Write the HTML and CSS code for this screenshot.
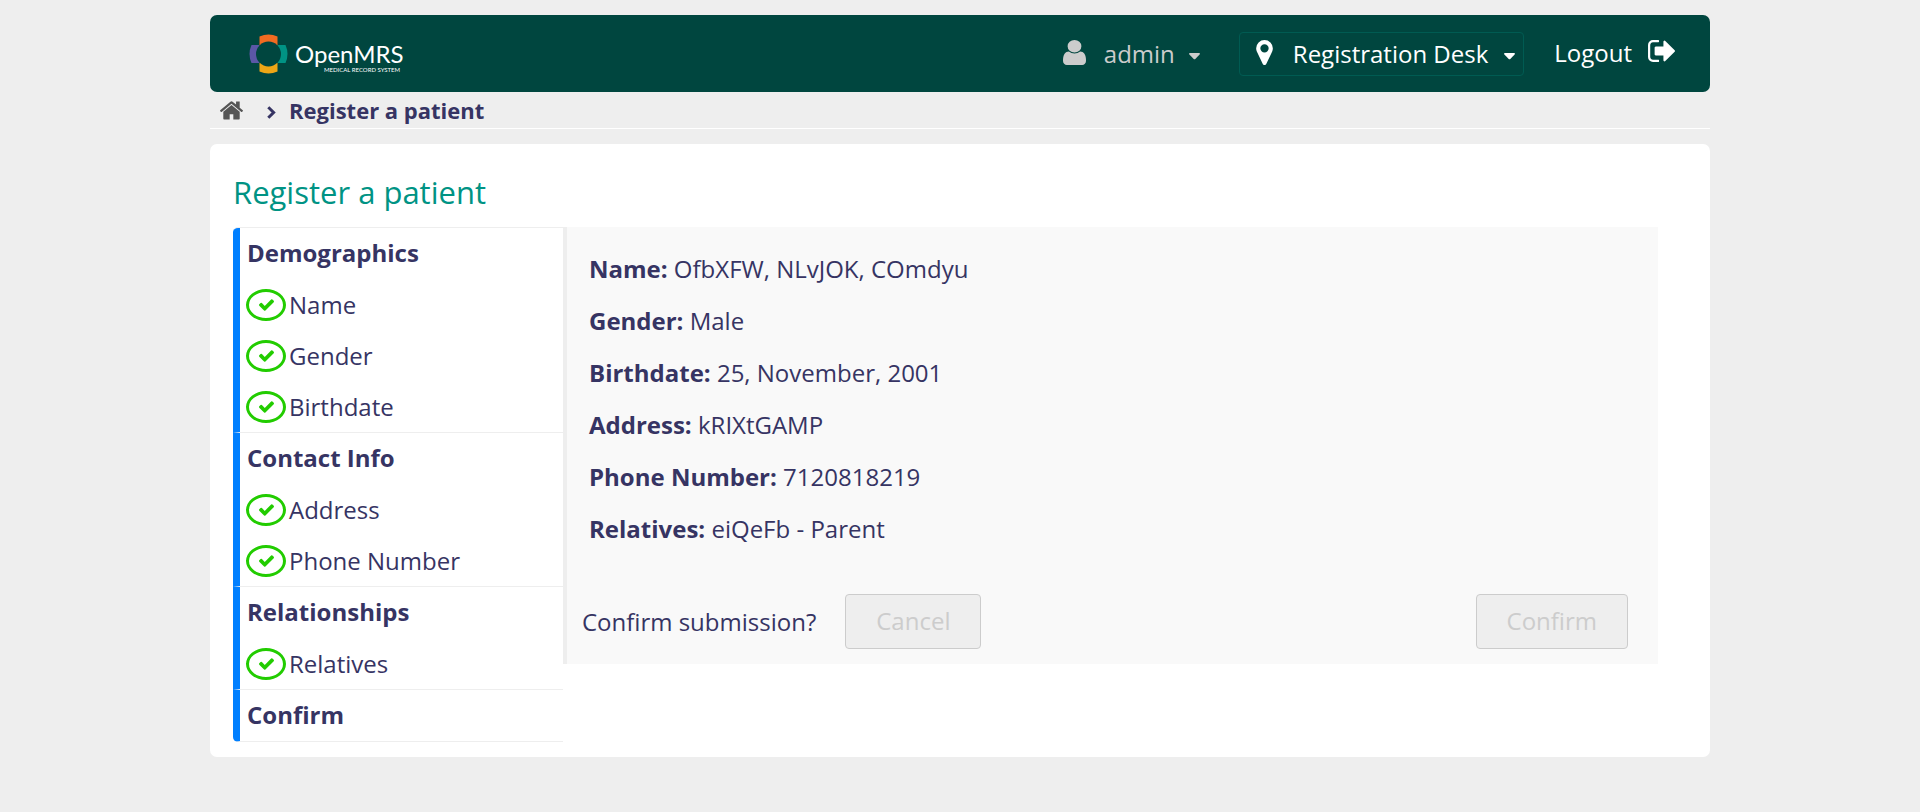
FILE: index.html
```html
<!DOCTYPE html>
<html lang="en">
<head>
<meta charset="utf-8">
<meta name="viewport" content="width=device-width, initial-scale=1">
<title>Register a patient</title>
<link rel="stylesheet" href="styles.css">
</head>
<body>
<svg class="sprite" aria-hidden="true">
  <symbol id="check" viewBox="121 334 1550 1188"><path d="M1671 566q0 40-28 68l-724 724-136 136q-28 28-68 28t-68-28l-136-136-362-362q-28-28-28-68t28-68l136-136q28-28 68-28t68 28l294 295 656-657q28-28 68-28t68 28l136 136q28 28 28 68z"/></symbol>
  <symbol id="caret" viewBox="0 0 11 7"><path d="M0.8 0h9.400q1.200 .3 .4 1.400l-4.300 4.500q-.8 .7-1.600 0l-4.300-4.500q-.8-1.100 .4-1.400z"/></symbol>
</svg>
<div class="page">
  <header class="topbar">
    <a class="logo" href="#" aria-label="OpenMRS home">
      <svg width="164" height="40" viewBox="0 0 164 40">
        <path fill="#f26b21" d="M10.500 2.500q9-4 18 0v10h-18z"/>
        <path fill="#eea616" d="M10.500 37.500q9 4 18 0v-9h-18z"/>
        <path fill="#5b57a6" d="M2.500 11q-4 9 0 18h8v-18z"/>
        <path fill="#009384" d="M36.500 11q4 9 0 18h-8v-18z"/>
        <circle cx="19.500" cy="20" r="12.500" fill="#00463f"/>
        <text class="logo-name" x="46" y="29">OpenMRS</text>
        <text class="logo-tag" x="75" y="38">MEDICAL RECORD SYSTEM</text>
      </svg>
    </a>
    <nav class="account" aria-label="Account">
      <button class="user" type="button">
        <svg class="icon" width="23" height="25" viewBox="256 128 1280 1536" preserveAspectRatio="none"><path d="M1536 1399q0 109-62.500 187t-150.500 78h-854q-88 0-150.500-78t-62.500-187q0-85 8.500-160.500t31.500-152 58.500-131 94-89 134.500-34.500q131 128 313 128t313-128q76 0 134.500 34.500t94 89 58.500 131 31.500 152 8.500 160.500zm-256-887q0 159-112.500 271.500t-271.500 112.500-271.500-112.500-112.500-271.500 112.500-271.500 271.500-112.500 271.500 112.500 112.500 271.500z"/></svg>
        <span class="user-name">admin</span>
        <svg class="caret" width="11" height="7"><use href="#caret"/></svg>
      </button>
      <button class="location" type="button">
        <svg class="icon" width="17" height="25" viewBox="0 128 1024 1536"><path d="M768 640q0-106-75-181t-181-75-181 75-75 181 75 181 181 75 181-75 75-181zm256 0q0 109-33 179l-364 774q-16 33-47.500 52t-67.500 19-67.500-19-46.500-52l-365-774q-33-70-33-179 0-212 150-362t362-150 362 150 150 362z"/></svg>
        <span class="location-name">Registration Desk</span>
        <svg class="caret" width="11" height="7"><use href="#caret"/></svg>
      </button>
      <a class="logout" href="#">Logout
        <svg class="icon" width="27" height="22" viewBox="64 256 1568 1280"><path d="M704 1440q0 4 1 20t.5 26.500-3 23.500-10 19.500-20.500 6.500h-320q-119 0-203.500-84.500t-84.500-203.500v-704q0-119 84.500-203.500t203.500-84.500h320q13 0 22.500 9.500t9.500 22.500q0 4 1 20t.5 26.500-3 23.500-10 19.500-20.500 6.500h-320q-66 0-113 47t-47 113v704q0 66 47 113t113 47h312l11.500 1 11.500 3 8 5.500 7 9 2 13.500zm928-544q0 26-19 45l-544 544q-19 19-45 19t-45-19-19-45v-288h-448q-26 0-45-19t-19-45v-384q0-26 19-45t45-19h448v-288q0-26 19-45t45-19 45 19l544 544q19 19 19 45z"/></svg>
      </a>
    </nav>
  </header>

  <nav class="breadcrumbs" aria-label="Breadcrumb">
    <a class="home" href="#" aria-label="Home">
      <svg width="23" height="19" viewBox="24 256 1616 1280"><path d="M1408 992v480q0 26-19 45t-45 19h-384v-384h-256v384h-384q-26 0-45-19t-19-45v-480q0-1 .5-3t.5-3l575-474 575 474q1 2 1 6zm223-69l-62 74q-8 9-21 11h-3q-13 0-21-7l-692-577-692 577q-12 8-24 7-13-2-21-11l-62-74q-8-10-7-23.500t11-21.500l719-599q32-26 76-26t76 26l244 204v-195q0-14 9-23t23-9h192q14 0 23 9t9 23v408l219 182q10 8 11 21.500t-7 23.500z"/></svg>
    </a>
    <svg class="chevron" width="9" height="13" viewBox="0 0 9 13"><path d="M1.300 1.300l5.300 5.200-5.300 5.200"/></svg>
    <span>Register a patient</span>
  </nav>

  <main class="card">
    <h1>Register a patient</h1>
    <div class="wizard">
      <nav class="steps" aria-label="Form sections">
        <section>
          <h2>Demographics</h2>
          <ul>
            <li><span class="done"><svg width="15" height="12"><use href="#check"/></svg></span>Name</li>
            <li><span class="done"><svg width="15" height="12"><use href="#check"/></svg></span>Gender</li>
            <li><span class="done"><svg width="15" height="12"><use href="#check"/></svg></span>Birthdate</li>
          </ul>
        </section>
        <section>
          <h2>Contact Info</h2>
          <ul>
            <li><span class="done"><svg width="15" height="12"><use href="#check"/></svg></span>Address</li>
            <li><span class="done"><svg width="15" height="12"><use href="#check"/></svg></span>Phone Number</li>
          </ul>
        </section>
        <section>
          <h2>Relationships</h2>
          <ul>
            <li><span class="done"><svg width="15" height="12"><use href="#check"/></svg></span>Relatives</li>
          </ul>
        </section>
        <section>
          <h2>Confirm</h2>
        </section>
      </nav>
      <form class="summary">
        <dl>
          <div><dt>Name:</dt> <dd>OfbXFW, NLvJOK, COmdyu</dd></div>
          <div><dt>Gender:</dt> <dd>Male</dd></div>
          <div><dt>Birthdate:</dt> <dd>25, November, 2001</dd></div>
          <div><dt>Address:</dt> <dd>kRIXtGAMP</dd></div>
          <div><dt>Phone Number:</dt> <dd>7120818219</dd></div>
          <div><dt>Relatives:</dt> <dd>eiQeFb - Parent</dd></div>
        </dl>
        <div class="actions">
          <span>Confirm submission?</span>
          <button type="button" disabled>Cancel</button>
          <button class="submit" type="submit" disabled>Confirm</button>
        </div>
      </form>
    </div>
  </main>
</div>
</body>
</html>
```
FILE: styles.css
```css
* {
  box-sizing: border-box;
}

body {
  margin: 0;
  background: #eee;
  color: #363463;
  font: 400 24px/34px "Open Sans", sans-serif;
}

.sprite {
  display: none;
}

svg {
  display: block;
  flex: none;
  fill: currentColor;
}

.page {
  max-width: 1500px;
  margin: 0 auto;
  padding: 15px 0;
}

.topbar {
  display: flex;
  align-items: center;
  justify-content: space-between;
  padding: 17px 35px 16px 39px;
  border-radius: 7px;
  background: #00463f;
  color: #fff;
}

.logo-name {
  fill: #fff;
  font: 400 24px Lato, sans-serif;
}

.logo-tag {
  fill: #fff;
  font: 400 6px Lato, sans-serif;
}

.account {
  display: flex;
  align-items: center;
  gap: 30px;
}

.account button {
  display: flex;
  align-items: center;
  border: 1px solid transparent;
  border-radius: 4px;
  background: none;
  color: inherit;
  font: inherit;
}

.account .icon {
  margin-bottom: 4px;
}

.account .user {
  gap: 18px;
  padding: 4px 8px;
  color: #ccc;
}

.account .location {
  gap: 20px;
  padding: 4px 8px 4px 16px;
  border-color: #005b52;
}

.account .caret {
  margin: 4px 0 0 -4px;
}

.logout {
  display: flex;
  align-items: center;
  gap: 16px;
  padding-bottom: 2px;
  color: #fff;
  text-decoration: none;
}

.breadcrumbs {
  display: flex;
  align-items: center;
  height: 37px;
  padding: 0 10px;
  border-bottom: 1px solid #fff;
  font-size: 22px;
  font-weight: 700;
}

.home {
  color: #555;
}

.chevron {
  margin: 4px 13px 0 24px;
  overflow: visible;
  fill: none;
  stroke: currentColor;
  stroke-width: 3;
}

.card {
  margin-top: 15px;
  padding: 23px 52px 15px 23px;
  border-radius: 7px;
  background: #fff;
}

h1 {
  margin: 0 0 10px;
  color: #009384;
  font-size: 31px;
  font-weight: 400;
  line-height: 50px;
}

.wizard {
  display: grid;
  grid-template-columns: 330px 1fr;
  align-items: start;
}

.steps {
  border-top: 1px solid #eee;
  border-radius: 5px 0 0 5px;
  overflow: hidden;
}

.steps section {
  border-bottom: 1px solid #eee;
  border-left: 7px solid #007fff;
}

.steps h2 {
  margin: 0;
  padding: 0 0 2px 7px;
  font-size: 24px;
  font-weight: 700;
  line-height: 49px;
}

.steps ul {
  margin: 0;
  padding: 0;
  list-style: none;
}

.steps li {
  display: flex;
  align-items: center;
  gap: 3px;
  padding-left: 6px;
  line-height: 51px;
}

.done {
  display: grid;
  place-items: center;
  width: 40px;
  height: 32px;
  border: 3px solid #2c0;
  border-radius: 50%;
  color: #2c0;
}

.summary {
  padding: 16px 30px 15px 15px;
  border-left: 4px solid #eee;
  background: #f9f9f9;
}

dl {
  margin: 0 0 39px 7px;
}

dl div {
  line-height: 52px;
}

dt,
dd {
  display: inline;
  margin: 0;
}

dt {
  font-weight: 700;
}

.actions {
  display: flex;
  align-items: center;
}

.actions button {
  padding: 9px 30px 10px;
  border: 1px solid #ccc;
  border-radius: 4px;
  background: #eee;
  color: #ccc;
  font: inherit;
}

.actions span + button {
  margin-left: 29px;
}

.actions .submit {
  margin-left: auto;
}
```
